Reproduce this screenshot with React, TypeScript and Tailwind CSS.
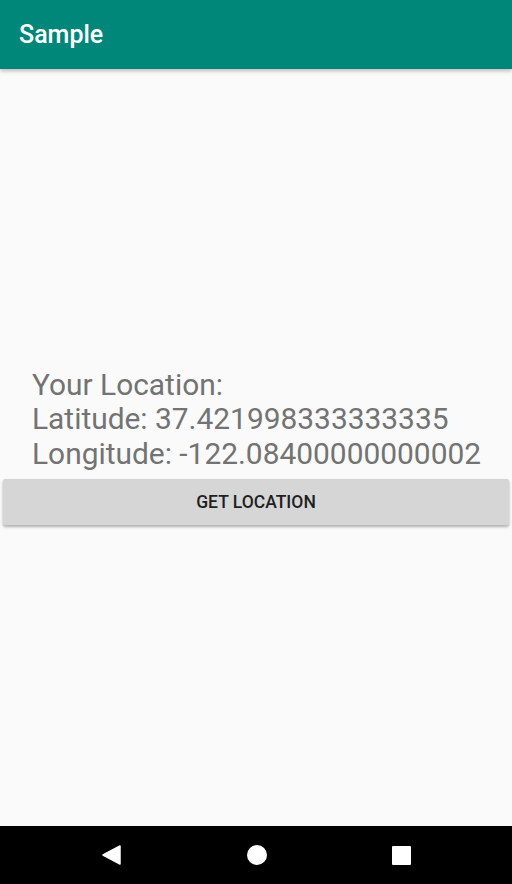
import React from "react";

export default function App() {
  return (
    <div
      className="w-[512px] h-[884px] flex flex-col bg-[#fafafa] overflow-hidden"
      style={{ fontFamily: "Roboto, 'Noto Sans', sans-serif" }}
    >
      <header className="h-[69px] shrink-0 bg-[#00877a] flex items-center px-[19px] shadow-[0_2px_4px_rgba(0,0,0,0.25)] z-10">
        <h1 className="text-white text-[25px] font-medium">Sample</h1>
      </header>

      <main className="flex-1 flex flex-col justify-center pb-[2px]">
        <div className="pl-[32px] text-[29.9px] leading-[34.5px] text-[#737373]">
          <p>Your Location:</p>
          <p>Latitude: 37.421998333333335</p>
          <p>Longitude: -122.08400000000002</p>
        </div>
        <button className="mx-[3px] mt-[8px] h-[46px] bg-[#d6d6d6] rounded-[2px] shadow-[0_2px_3px_rgba(0,0,0,0.3)] text-[17.5px] font-medium text-[#1f1f1f]">
          GET LOCATION
        </button>
      </main>

      <nav className="h-[58px] shrink-0 bg-black flex items-center justify-between pl-[101px] pr-[101px]">
        <svg width="20" height="20" viewBox="0 0 20 20">
          <path d="M19 1 L19 19 L2 10 Z" fill="white" strokeLinejoin="round" stroke="white" strokeWidth="1.5" />
        </svg>
        <span className="w-[20px] h-[20px] rounded-full bg-white" />
        <span className="w-[19px] h-[19px] rounded-[1px] bg-white" />
      </nav>
    </div>
  );
}
